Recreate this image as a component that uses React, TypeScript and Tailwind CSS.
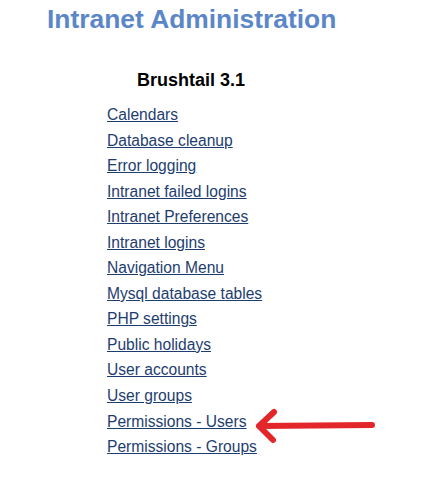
import React from "react";

const links = [
  "Calendars",
  "Database cleanup",
  "Error logging",
  "Intranet failed logins",
  "Intranet Preferences",
  "Intranet logins",
  "Navigation Menu",
  "Mysql database tables",
  "PHP settings",
  "Public holidays",
  "User accounts",
  "User groups",
  "Permissions - Users",
  "Permissions - Groups",
];

export default function App() {
  return (
    <div className="relative min-h-[501px] w-[447px] bg-white font-['Liberation_Sans',Arial,sans-serif]">
      <h1 className="pl-[47px] pt-[4px] text-[26.4px] leading-[30px] font-bold text-[#5b87c8]">
        Intranet Administration
      </h1>

      <h2 className="mt-[36px] pl-[137px] text-[18px] leading-[21px] font-bold text-black">
        Brushtail 3.1
      </h2>

      <ul className="mt-[11px] pl-[107px]">
        {links.map((label) => (
          <li key={label} className="text-[15.6px] leading-[25.55px]">
            <a href="#" className="text-[#1e3d6f] underline">
              {label}
            </a>
          </li>
        ))}
      </ul>

      {/* red annotation arrow */}
      <svg
        className="absolute left-[250px] top-[405px]"
        width="130"
        height="40"
        viewBox="0 0 130 40"
      >
        <path
          d="M9 21 L122 20 M24 7 L9 21 L23 35"
          fill="none"
          stroke="#e2262a"
          strokeWidth="6"
          strokeLinecap="round"
          strokeLinejoin="round"
        />
      </svg>
    </div>
  );
}
